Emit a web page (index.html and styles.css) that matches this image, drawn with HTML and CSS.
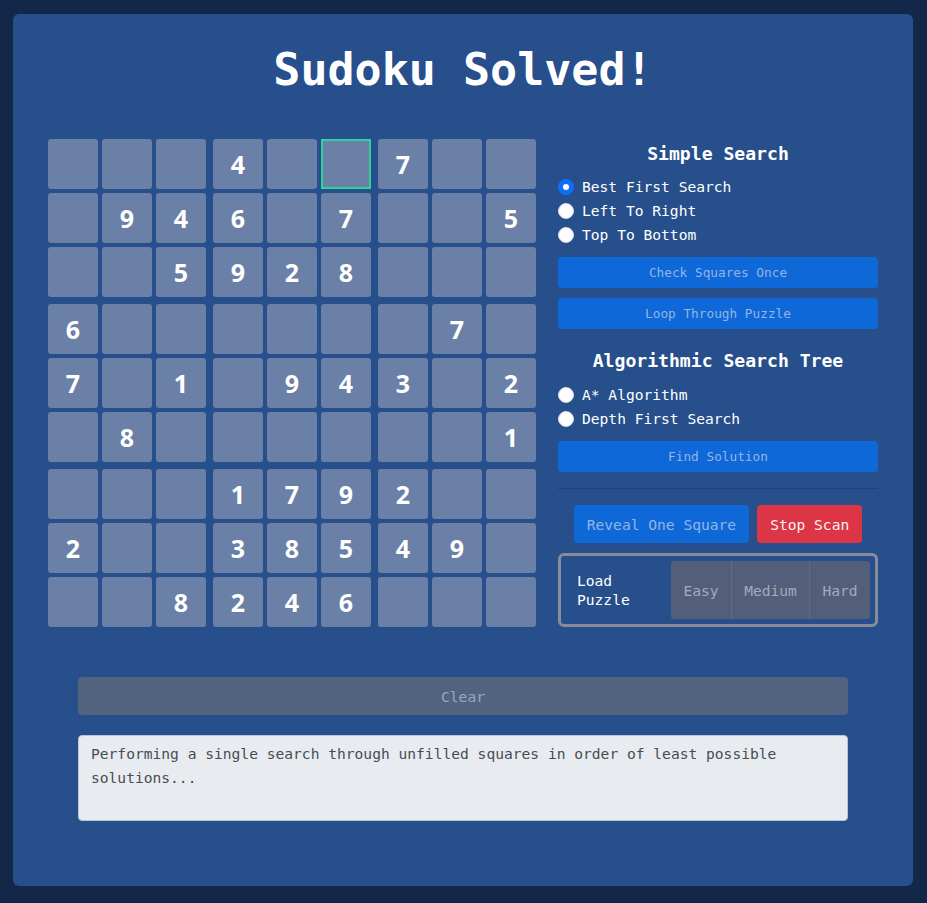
FILE: index.html
```html
<!DOCTYPE html>
<html lang="en">
<head>
<meta charset="utf-8">
<title>Sudoku Solver</title>
<link rel="stylesheet" href="styles.css">
</head>
<body>
<main class="panel">
  <h1 class="title">Sudoku Solved!</h1>
  <div class="main-row">
    <div class="board">
      <div class="box">
        <div class="cell"></div><div class="cell"></div><div class="cell"></div>
        <div class="cell"></div><div class="cell">9</div><div class="cell">4</div>
        <div class="cell"></div><div class="cell"></div><div class="cell">5</div>
      </div>
      <div class="box">
        <div class="cell">4</div><div class="cell"></div><div class="cell current"></div>
        <div class="cell">6</div><div class="cell"></div><div class="cell">7</div>
        <div class="cell">9</div><div class="cell">2</div><div class="cell">8</div>
      </div>
      <div class="box">
        <div class="cell">7</div><div class="cell"></div><div class="cell"></div>
        <div class="cell"></div><div class="cell"></div><div class="cell">5</div>
        <div class="cell"></div><div class="cell"></div><div class="cell"></div>
      </div>
      <div class="box">
        <div class="cell">6</div><div class="cell"></div><div class="cell"></div>
        <div class="cell">7</div><div class="cell"></div><div class="cell">1</div>
        <div class="cell"></div><div class="cell">8</div><div class="cell"></div>
      </div>
      <div class="box">
        <div class="cell"></div><div class="cell"></div><div class="cell"></div>
        <div class="cell"></div><div class="cell">9</div><div class="cell">4</div>
        <div class="cell"></div><div class="cell"></div><div class="cell"></div>
      </div>
      <div class="box">
        <div class="cell"></div><div class="cell">7</div><div class="cell"></div>
        <div class="cell">3</div><div class="cell"></div><div class="cell">2</div>
        <div class="cell"></div><div class="cell"></div><div class="cell">1</div>
      </div>
      <div class="box">
        <div class="cell"></div><div class="cell"></div><div class="cell"></div>
        <div class="cell">2</div><div class="cell"></div><div class="cell"></div>
        <div class="cell"></div><div class="cell"></div><div class="cell">8</div>
      </div>
      <div class="box">
        <div class="cell">1</div><div class="cell">7</div><div class="cell">9</div>
        <div class="cell">3</div><div class="cell">8</div><div class="cell">5</div>
        <div class="cell">2</div><div class="cell">4</div><div class="cell">6</div>
      </div>
      <div class="box">
        <div class="cell">2</div><div class="cell"></div><div class="cell"></div>
        <div class="cell">4</div><div class="cell">9</div><div class="cell"></div>
        <div class="cell"></div><div class="cell"></div><div class="cell"></div>
      </div>
    </div>

    <aside class="controls">
      <h2 class="section-title">Simple Search</h2>
      <div class="radio-list">
        <label class="radio-row"><input type="radio" name="simple" checked><span>Best First Search</span></label>
        <label class="radio-row"><input type="radio" name="simple"><span>Left To Right</span></label>
        <label class="radio-row"><input type="radio" name="simple"><span>Top To Bottom</span></label>
      </div>
      <button class="btn btn-wide btn-primary-dim">Check Squares Once</button>
      <button class="btn btn-wide btn-primary-dim">Loop Through Puzzle</button>

      <h2 class="section-title second">Algorithmic Search Tree</h2>
      <div class="radio-list">
        <label class="radio-row"><input type="radio" name="tree"><span>A* Algorithm</span></label>
        <label class="radio-row"><input type="radio" name="tree"><span>Depth First Search</span></label>
      </div>
      <button class="btn btn-wide btn-primary-dim">Find Solution</button>

      <hr class="divider">

      <div class="action-row">
        <button class="btn btn-action btn-primary-dim">Reveal One Square</button>
        <button class="btn btn-action btn-danger">Stop Scan</button>
      </div>

      <div class="load-box">
        <span class="load-label">Load Puzzle</span>
        <div class="level-group">
          <button class="level">Easy</button>
          <button class="level">Medium</button>
          <button class="level">Hard</button>
        </div>
      </div>
    </aside>
  </div>

  <button class="btn btn-clear">Clear</button>
  <div class="log">Performing a single search through unfilled squares in order of least possible solutions...</div>
</main>
</body>
</html>
```

FILE: styles.css
```css
* { box-sizing: border-box; }

html, body {
  margin: 0;
  background: #132849;
}

body {
  padding: 14px 14px 17px 13px;
  font-family: "DejaVu Sans Mono", "Liberation Mono", monospace;
  font-size: 14.6px;
  color: #ffffff;
}

.panel {
  width: 900px;
  background: #264f8b;
  border-radius: 6px;
  padding: 29px 35px 65px;
  display: flex;
  flex-direction: column;
}

.title {
  margin: 0 0 42px;
  text-align: center;
  font-size: 45px;
  line-height: 54px;
  font-weight: 700;
  color: #ffffff;
}

.main-row {
  display: flex;
  gap: 22px;
  align-items: flex-start;
}

.board {
  display: grid;
  grid-template-columns: repeat(3, 158px);
  grid-template-rows: repeat(3, 158px);
  gap: 7px;
  flex: 0 0 488px;
}

.box {
  display: grid;
  grid-template-columns: repeat(3, 50px);
  grid-template-rows: repeat(3, 50px);
  gap: 4px;
}

.cell {
  background: #6b80a6;
  border-radius: 3px;
  display: flex;
  align-items: center;
  justify-content: center;
  font-family: "Open Sans", "DejaVu Sans", sans-serif;
  font-weight: 700;
  font-size: 25px;
  color: #ffffff;
}

.cell.current {
  border: 2px solid #2fd39a;
  border-radius: 0;
}

.controls {
  flex: 0 0 320px;
  display: flex;
  flex-direction: column;
  padding-top: 3px;
}

.section-title {
  margin: 0 0 9px;
  text-align: center;
  font-size: 18.1px;
  line-height: 24px;
  font-weight: 700;
}

.section-title.second {
  margin-top: 20px;
  margin-bottom: 10px;
}

.radio-list {
  display: flex;
  flex-direction: column;
}

.radio-row {
  display: flex;
  align-items: center;
  gap: 8px;
  height: 24px;
  line-height: 24px;
}

.radio-row input {
  appearance: none;
  -webkit-appearance: none;
  margin: 0;
  width: 16px;
  height: 16px;
  border-radius: 50%;
  background: #ffffff;
  border: 1px solid #d6dbe2;
  flex: 0 0 16px;
}

.radio-row input:checked {
  background: #ffffff;
  border: 5px solid #0d6efd;
}

.btn {
  font-family: inherit;
  border: 0;
  border-radius: 4px;
  cursor: pointer;
}

.btn-wide {
  margin-top: 10px;
  height: 31px;
  width: 100%;
  font-size: 12.75px;
}

.btn-primary-dim {
  background: #0f68d8;
  color: #93b5e4;
}

.divider {
  margin: 16px 0 0;
  border: 0;
  border-top: 1px solid #1e4379;
  height: 0;
}

.action-row {
  display: flex;
  justify-content: center;
  gap: 8px;
  margin-top: 16px;
}

.btn-action {
  height: 38px;
  padding: 0 13px;
  font-size: 14.6px;
}

.btn-danger {
  background: #dc3545;
  color: #f8f3f4;
}

.load-box {
  margin-top: 10px;
  border: 3px solid #878c96;
  border-radius: 6px;
  padding: 5px;
  display: flex;
  align-items: stretch;
  height: 74px;
}

.load-label {
  flex: 0 0 105px;
  padding: 0 20px 0 11px;
  display: flex;
  align-items: center;
  line-height: 19px;
  color: #ffffff;
}

.level-group {
  display: flex;
  flex: 1;
  background: #535f79;
  border-radius: 4px;
  overflow: hidden;
}

.level {
  font-family: inherit;
  font-size: 14.6px;
  background: #535f79;
  color: #a2abba;
  border: 0;
  border-left: 1px solid #5f6a83;
  padding: 0 12px;
}

.level:first-child {
  border-left: 0;
  flex: 0 0 60px;
}

.level:nth-child(2) { flex: 0 0 78px; }
.level:nth-child(3) { flex: 1; }

.btn-clear {
  margin: 50px 30px 0;
  height: 38px;
  background: #526380;
  color: #9ba8bb;
  font-size: 14.6px;
}

.log {
  margin: 20px 30px 0;
  height: 86px;
  background: #e8ebef;
  border: 1px solid #b8c4d4;
  border-radius: 4px;
  padding: 6px 12px;
  line-height: 24px;
  color: #474c53;
  font-size: 14.6px;
}
```
